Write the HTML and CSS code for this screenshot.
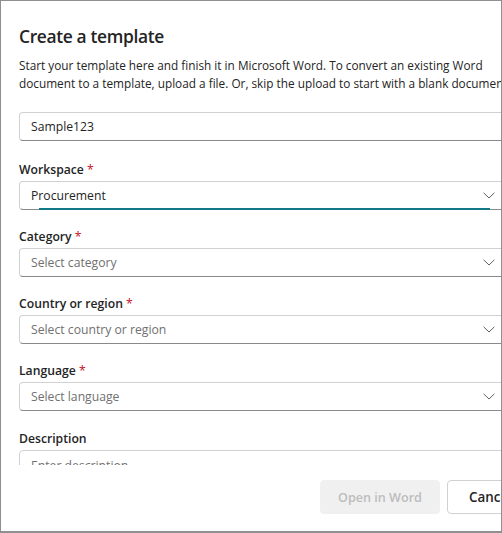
FILE: index.html
```html
<!DOCTYPE html>
<html lang="en">
<head>
<meta charset="utf-8">
<title>Create a template</title>
<link rel="stylesheet" href="styles.css">
</head>
<body>
<div class="frame">
  <div class="surface">
    <div class="scroll">
      <h1 class="title">Create a template</h1>
      <p class="intro">Start your template here and finish it in Microsoft Word. To convert an existing Word document to a template, upload a file. Or, skip the upload to start with a blank document.</p>
      <div class="fields">
        <div class="input"><span class="value">Sample123</span></div>

        <div class="field first">
          <div class="label">Workspace <span class="req">*</span></div>
          <div class="input select focused"><span class="value">Procurement</span>
            <svg class="chev" width="12" height="7" viewBox="0 0 12 7"><path d="M0.6 0.8 L6 6 L11.4 0.8" fill="none" stroke="#616161" stroke-width="1"/></svg>
          </div>
        </div>

        <div class="field">
          <div class="label">Category <span class="req">*</span></div>
          <div class="input select"><span class="placeholder">Select category</span>
            <svg class="chev" width="12" height="7" viewBox="0 0 12 7"><path d="M0.6 0.8 L6 6 L11.4 0.8" fill="none" stroke="#616161" stroke-width="1"/></svg>
          </div>
        </div>

        <div class="field">
          <div class="label">Country or region <span class="req">*</span></div>
          <div class="input select"><span class="placeholder">Select country or region</span>
            <svg class="chev" width="12" height="7" viewBox="0 0 12 7"><path d="M0.6 0.8 L6 6 L11.4 0.8" fill="none" stroke="#616161" stroke-width="1"/></svg>
          </div>
        </div>

        <div class="field">
          <div class="label">Language <span class="req">*</span></div>
          <div class="input select"><span class="placeholder">Select language</span>
            <svg class="chev" width="12" height="7" viewBox="0 0 12 7"><path d="M0.6 0.8 L6 6 L11.4 0.8" fill="none" stroke="#616161" stroke-width="1"/></svg>
          </div>
        </div>

        <div class="field last">
          <div class="label">Description</div>
          <div class="textarea"><span class="placeholder">Enter description</span></div>
        </div>
      </div>
    </div>
    <div class="actions">
      <button class="btn disabled">Open in Word</button>
      <button class="btn secondary">Cancel</button>
    </div>
  </div>
</div>
</body>
</html>
```
FILE: styles.css
```css
* { box-sizing: border-box; }
html, body { margin: 0; padding: 0; background: #fff; }
body {
  font-family: "Open Sans", "Noto Sans", sans-serif;
  color: #242424;
}
.frame {
  width: 502px;
  height: 533px;
  border: 1px solid #8f8f8f;
  border-bottom-width: 2px;
  overflow: hidden;
  background: #fff;
}
.surface {
  width: 560px;
  padding: 0 0 0 18px;
}
.scroll {
  height: 464px;
  overflow: hidden;
  padding-top: 21px;
}
.title {
  margin: 0;
  font-size: 17.4px;
  line-height: 28px;
  font-weight: 600;
  letter-spacing: -0.35px;
}
.intro {
  margin: 7px 0 0;
  width: 520px;
  font-size: 11.8px;
  line-height: 17.5px;
}
.fields {
  width: 491px;
  margin-top: 20px;
  display: flex;
  flex-direction: column;
  gap: 18px;
}
.field { display: flex; flex-direction: column; gap: 2px; }
.field.first { margin-top: 2px; }
.field.last { margin-top: 1px; }
.label {
  font-size: 12.2px;
  line-height: 18px;
  font-weight: 600;
}
.req { color: #c50f1f; font-weight: 400; }
.input {
  position: relative;
  height: 29px;
  border: 1px solid #d1d1d1;
  border-bottom-color: #8a8a8a;
  border-radius: 4px;
  display: flex;
  align-items: center;
  padding: 0 11px;
  font-size: 12.2px;
}
.value { color: #242424; }
.placeholder { color: #707070; }
.select .chev { margin-left: auto; margin-right: 3px; }
.focused::after {
  content: "";
  position: absolute;
  left: 19px;
  right: 19px;
  bottom: -1px;
  height: 2px;
  background: #127887;
}
.textarea {
  height: 60px;
  border: 1px solid #d1d1d1;
  border-radius: 4px;
  padding: 6px 11px;
  font-size: 12.2px;
}
.actions {
  width: 524px;
  display: flex;
  justify-content: flex-end;
  gap: 7px;
  padding-top: 15px;
}
.btn {
  font-family: inherit;
  font-size: 12.6px;
  font-weight: 600;
  height: 34px;
  border-radius: 4px;
  padding: 0 12px;
}
.disabled {
  width: 120px;
  background: #f0f0f0;
  color: #bdbdbd;
  border: 1px solid #f0f0f0;
}
.secondary {
  width: 96px;
  background: #fff;
  color: #242424;
  border: 1px solid #d1d1d1;
  text-align: left;
  padding-left: 21px;
  font-size: 13.4px;
}
```
